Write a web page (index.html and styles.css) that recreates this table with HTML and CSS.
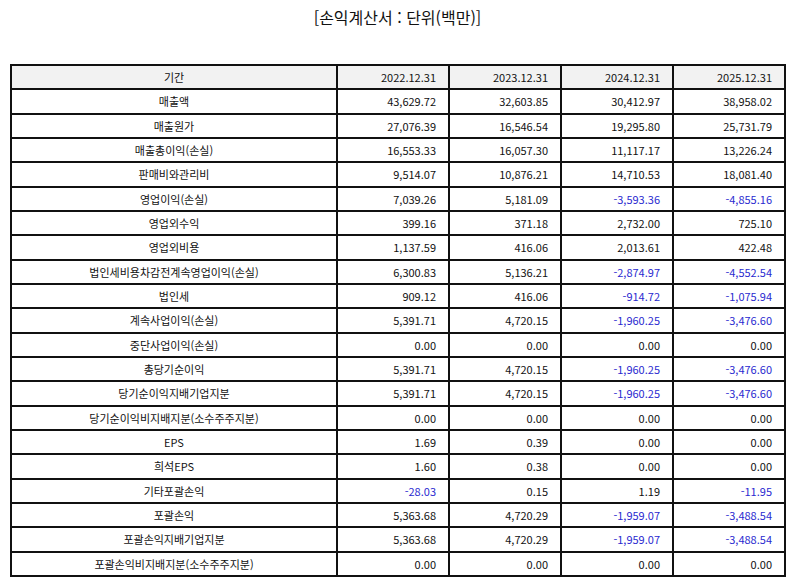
FILE: index.html
```html
<!DOCTYPE html>
<html lang="ko">
<head>
<meta charset="utf-8">
<link rel="stylesheet" href="styles.css">
</head>
<body>
<h1 class="title">[손익계산서 : 단위(백만)]</h1>
<table class="fin">
<colgroup><col class="c-label"><col class="c-num"><col class="c-num"><col class="c-num"><col class="c-num"></colgroup>
<thead>
<tr><th class="label">기간</th><th>2022.12.31</th><th>2023.12.31</th><th>2024.12.31</th><th>2025.12.31</th></tr>
</thead>
<tbody>
<tr><td class="label">매출액</td><td>43,629.72</td><td>32,603.85</td><td>30,412.97</td><td>38,958.02</td></tr>
<tr><td class="label">매출원가</td><td>27,076.39</td><td>16,546.54</td><td>19,295.80</td><td>25,731.79</td></tr>
<tr><td class="label">매출총이익(손실)</td><td>16,553.33</td><td>16,057.30</td><td>11,117.17</td><td>13,226.24</td></tr>
<tr><td class="label">판매비와관리비</td><td>9,514.07</td><td>10,876.21</td><td>14,710.53</td><td>18,081.40</td></tr>
<tr><td class="label">영업이익(손실)</td><td>7,039.26</td><td>5,181.09</td><td class="neg">-3,593.36</td><td class="neg">-4,855.16</td></tr>
<tr><td class="label">영업외수익</td><td>399.16</td><td>371.18</td><td>2,732.00</td><td>725.10</td></tr>
<tr><td class="label">영업외비용</td><td>1,137.59</td><td>416.06</td><td>2,013.61</td><td>422.48</td></tr>
<tr><td class="label">법인세비용차감전계속영업이익(손실)</td><td>6,300.83</td><td>5,136.21</td><td class="neg">-2,874.97</td><td class="neg">-4,552.54</td></tr>
<tr><td class="label">법인세</td><td>909.12</td><td>416.06</td><td class="neg">-914.72</td><td class="neg">-1,075.94</td></tr>
<tr><td class="label">계속사업이익(손실)</td><td>5,391.71</td><td>4,720.15</td><td class="neg">-1,960.25</td><td class="neg">-3,476.60</td></tr>
<tr><td class="label">중단사업이익(손실)</td><td>0.00</td><td>0.00</td><td>0.00</td><td>0.00</td></tr>
<tr><td class="label">총당기순이익</td><td>5,391.71</td><td>4,720.15</td><td class="neg">-1,960.25</td><td class="neg">-3,476.60</td></tr>
<tr><td class="label">당기순이익지배기업지분</td><td>5,391.71</td><td>4,720.15</td><td class="neg">-1,960.25</td><td class="neg">-3,476.60</td></tr>
<tr><td class="label">당기순이익비지배지분(소수주주지분)</td><td>0.00</td><td>0.00</td><td>0.00</td><td>0.00</td></tr>
<tr><td class="label">EPS</td><td>1.69</td><td>0.39</td><td>0.00</td><td>0.00</td></tr>
<tr><td class="label">희석EPS</td><td>1.60</td><td>0.38</td><td>0.00</td><td>0.00</td></tr>
<tr><td class="label">기타포괄손익</td><td class="neg">-28.03</td><td>0.15</td><td>1.19</td><td class="neg">-11.95</td></tr>
<tr><td class="label">포괄손익</td><td>5,363.68</td><td>4,720.29</td><td class="neg">-1,959.07</td><td class="neg">-3,488.54</td></tr>
<tr><td class="label">포괄손익지배기업지분</td><td>5,363.68</td><td>4,720.29</td><td class="neg">-1,959.07</td><td class="neg">-3,488.54</td></tr>
<tr><td class="label">포괄손익비지배지분(소수주주지분)</td><td>0.00</td><td>0.00</td><td>0.00</td><td>0.00</td></tr>
</tbody>
</table>
</body>
</html>
```

FILE: styles.css
```css
html, body {
  margin: 0;
  padding: 0;
  background: #fff;
}
body {
  padding: 0 9px 0 10px;
  font-family: "Noto Sans CJK KR", "Noto Sans", sans-serif;
  color: #111;
}
.title {
  margin: 0;
  height: 64px;
  padding-top: 5px;
  box-sizing: border-box;
  font-size: 16px;
  font-weight: normal;
  line-height: 24px;
  text-align: center;
  color: #111;
}
.fin {
  width: 775px;
  border-collapse: separate;
  border-spacing: 0;
  border: 1px solid #111;
  table-layout: fixed;
  font-size: 11px;
}
.c-label { width: 326px; }
.c-num { width: 112px; }
.fin th, .fin td {
  border: 1px solid #111;
  height: 22.33px;
  padding: 0 12px 0 4px;
  line-height: 14px;
  text-align: right;
  font-weight: normal;
  color: #111;
  white-space: nowrap;
}
.fin thead th {
  background: #f2f2f2;
}
.fin .label {
  text-align: center;
  padding: 0 4px;
}
.fin .neg {
  color: #2a2ad0;
}
```
